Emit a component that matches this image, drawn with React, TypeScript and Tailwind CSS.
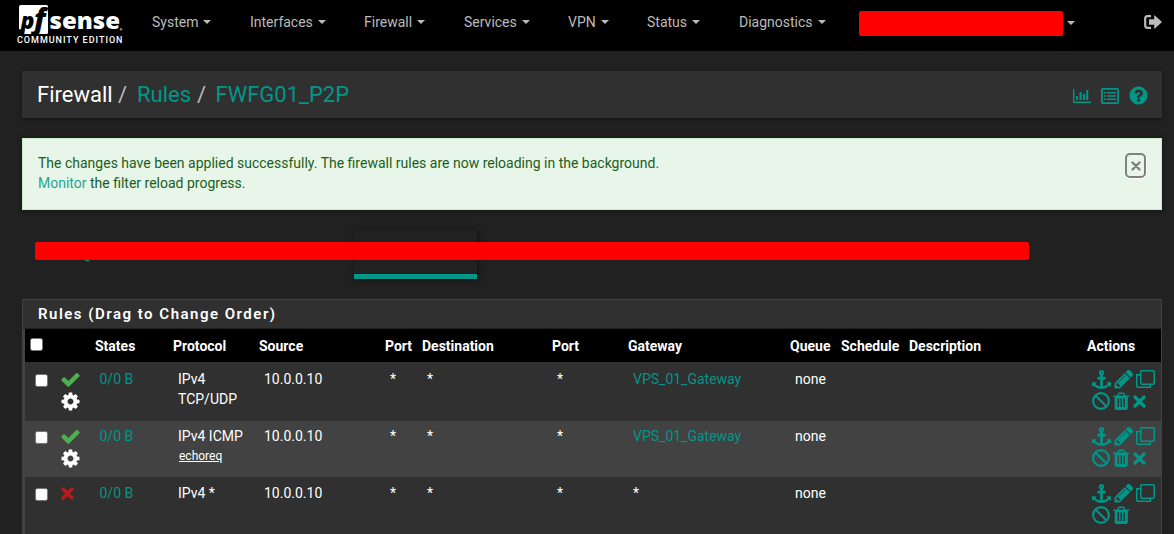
import React from 'react';

const PATHS = {
  check:
    'M1671 566q0 40-28 68l-724 724-136 136q-28 28-68 28t-68-28l-136-136-362-362q-28-28-28-68t28-68l136-136q28-28 68-28t68 28l294 295 656-657q28-28 68-28t68 28l136 136q28 28 28 68z',
  cog: 'M1152 896q0-106-75-181t-181-75-181 75-75 181 75 181 181 75 181-75 75-181zm512-109v222q0 12-8 23t-20 13l-185 28q-19 54-39 91 35 50 107 138 10 12 10 25t-9 23q-27 37-99 108t-94 71q-12 0-26-9l-138-108q-44 23-91 38-16 136-29 186-7 28-36 28h-222q-14 0-24.5-8.5t-11.5-21.5l-28-184q-49-16-90-37l-141 107q-10 9-25 9-14 0-25-11-126-114-165-168-7-10-7-23 0-12 8-23 15-21 51-66.5t54-70.5q-27-50-41-99l-183-27q-13-2-21-12.5t-8-23.5v-222q0-12 8-23t19-13l186-28q14-46 39-92-40-57-107-138-10-12-10-24 0-10 9-23 26-36 98.500-107.500t94.500-71.500q13 0 26 10l138 107q44-23 91-38 16-136 29-186 7-28 36-28h222q14 0 24.500 8.500t11.500 21.500l28 184q49 16 90 37l142-107q9-9 24-9 13 0 25 10 129 119 165 170 7 8 7 22 0 12-8 23-15 21-51 66.500t-54 70.500q26 50 41 98l183 28q13 2 21 12.500t8 23.500z',
  trash:
    'M704 1376v-704q0-14-9-23t-23-9h-64q-14 0-23 9t-9 23v704q0 14 9 23t23 9h64q14 0 23-9t9-23zm256 0v-704q0-14-9-23t-23-9h-64q-14 0-23 9t-9 23v704q0 14 9 23t23 9h64q14 0 23-9t9-23zm256 0v-704q0-14-9-23t-23-9h-64q-14 0-23 9t-9 23v704q0 14 9 23t23 9h64q14 0 23-9t9-23zm-544-992h448l-48-117q-7-9-17-11h-317q-10 2-17 11zm928 32v64q0 14-9 23t-23 9h-96v948q0 83-47 143.5t-113 60.5h-832q-66 0-113-58.5t-47-141.5v-952h-96q-14 0-23-9t-9-23v-64q0-14 9-23t23-9h309l70-167q15-37 54-63t79-26h320q40 0 79 26t54 63l70 167h309q14 0 23 9t9 23z',
  pencil:
    'M491 1536l91-91-235-235-91 91v107h128v128h107zm523-928q0-22-22-22-10 0-17 7l-542 542q-7 7-7 17 0 22 22 22 10 0 17-7l542-542q7-7 7-17zm-54-192l416 416-832 832h-416v-416zm683 96q0 53-37 90l-166 166-416-416 166-165q36-38 90-38 53 0 91 38l235 234q37 39 37 91z',
  anchor:
    'M960 256q0-26-19-45t-45-19-45 19-19 45 19 45 45 19 45-19 19-45zm832 928v352q0 22-20 30-8 2-12 2-12 0-23-9l-93-93q-119 143-318.500 226.500t-429.500 83.500-429.500-83.500-318.500-226.500l-93 93q-9 9-23 9-4 0-12-2-20-8-20-30v-352q0-14 9-23t23-9h352q22 0 30 20 8 19-7 35l-100 100q67 91 189.500 153.500t271.500 82.500v-647h-192q-26 0-45-19t-19-45v-128q0-26 19-45t45-19h192v-163q-58-34-93-92.500t-35-128.500q0-106 75-181t181-75 181 75 75 181q0 70-35 128.500t-93 92.500v163h192q26 0 45 19t19 45v128q0 26-19 45t-45 19h-192v647q149-20 271.500-82.500t189.500-153.500l-100-100q-15-16-7-35 8-20 30-20h352q14 0 23 9t9 23z',
  question:
    'M1024 1376v-192q0-14-9-23t-23-9h-192q-14 0-23 9t-9 23v192q0 14 9 23t23 9h192q14 0 23-9t9-23zm256-672q0-88-55.500-163t-138.500-116-170-41q-243 0-371 213-15 24 8 42l132 100q7 6 19 6 16 0 25-12 53-68 86-92 34-24 86-24 48 0 85.500 26t37.500 59q0 38-20 61t-68 45q-63 28-115.500 86.500t-52.500 125.500v36q0 14 9 23t23 9h192q14 0 23-9t9-23q0-19 21.500-49.500t54.500-49.500q32-18 49-28.500t46-35 44.500-48 28-60.500 12.500-81zm384 192q0 209-103 385.500t-279.500 279.500-385.500 103-385.500-103-279.500-279.500-103-385.500 103-385.500 279.500-279.500 385.500-103 385.500 103 279.500 279.500 103 385.500z',
};

function Icon({ name, className }: { name: keyof typeof PATHS; className?: string }) {
  return (
    <svg viewBox="0 0 1792 1792" fill="currentColor" className={`shrink-0 overflow-visible ${className ?? ''}`}>
      <path d={PATHS[name]} />
    </svg>
  );
}

function CrossIcon({ className }: { className?: string }) {
  return (
    <svg viewBox="0 0 13 13" className={`shrink-0 ${className ?? ''}`}>
      <path d="M2 2l9 9M11 2l-9 9" stroke="currentColor" strokeWidth="3.2" strokeLinecap="round" />
    </svg>
  );
}

function BanIcon() {
  return (
    <svg viewBox="0 0 18 18" fill="none" stroke="currentColor" className="size-[18px] shrink-0">
      <circle cx="9" cy="9" r="7.900" strokeWidth="2.100" />
      <path d="M3.500 3.500l11 11" strokeWidth="2.100" />
    </svg>
  );
}

function SignOutIcon({ className }: { className?: string }) {
  return (
    <svg viewBox="0 0 18 14" className={`h-[14px] w-[18px] ${className ?? ''}`}>
      <path d="M7 1.100H3.500Q1.200 1.100 1.200 3.400v7.200q0 2.300 2.300 2.300H7" fill="none" stroke="currentColor" strokeWidth="2.200" />
      <path d="M5 4.200h5.200V.800q0-.900.700-.300l6.600 5.900q.600.600 0 1.200l-6.600 5.900q-.700.600-.700-.300V9.800H5z" fill="currentColor" />
    </svg>
  );
}

function CloneIcon() {
  return (
    <svg viewBox="0 0 19 18" fill="none" stroke="currentColor" className="h-[18px] w-[19px] shrink-0">
      <rect x="4.750" y="0.750" width="13.500" height="13.500" rx="1" strokeWidth="1.500" />
      <path d="M4 4.700H.750V16.250q0 1 1 1H14.300V14.500" strokeWidth="1.500" />
    </svg>
  );
}

function ChartIcon() {
  return (
    <svg viewBox="0 0 18 14" fill="currentColor" className="h-[14px] w-[18px]">
      <path d="M0 0h1.400v12.500H18V14H0zM3 7h2v4H3zM6.500 3h2v8h-2zM9.800 5h2v6h-2zM13.200 1h2v10h-2z" />
    </svg>
  );
}

function ListIcon() {
  return (
    <svg viewBox="0 0 18 16" className="h-[16px] w-[18px]">
      <rect x="0.900" y="0.900" width="16.200" height="14.200" rx="1" fill="none" stroke="currentColor" strokeWidth="1.800" />
      <path
        fill="currentColor"
        d="M3 4h2v1.500H3zM6 4h9v1.500H6zM3 7.200h2v1.500H3zM6 7.200h9v1.500H6zM3 10.500h2V12H3zM6 10.500h9V12H6z"
      />
    </svg>
  );
}

function Logo() {
  return (
    <svg viewBox="0 0 124 50" className="h-[50px] w-[124px] shrink-0">
      <path d="M21 5H46.500q1.500 0 1.500 1.500V32.500q0 1.500-1.500 1.500H22V30L19 29V7q0-2 2-2z" fill="#fff" />
      <g fontFamily="Open Sans, sans-serif" fontWeight="800">
        <text y="29" fontStyle="italic" fill="#000">
          <tspan x="20.500" fontSize="23">p</tspan>
          <tspan x="34" fontSize="28">f</tspan>
        </text>
        <text x="49.500" y="29" fontSize="23.500" textLength="70.500" lengthAdjust="spacingAndGlyphs" fill="#fff">
          sense
        </text>
      </g>
      <circle cx="121" cy="29.300" r="1.200" fill="#888" />
      <text x="17" y="43" fontFamily="Roboto, sans-serif" fontWeight="500" fontSize="9" textLength="105.500" fill="#fff">
        COMMUNITY EDITION
      </text>
    </svg>
  );
}

function Caret() {
  return <span className="border-x-4 border-t-4 border-x-transparent border-t-[#bbb]" />;
}

const MENU = [
  { label: 'System', width: 'w-[98px]', gap: 'gap-[5px]' },
  { label: 'Interfaces', width: 'w-[114px]', gap: 'gap-[5px]' },
  { label: 'Firewall', width: 'w-[100px]', gap: 'gap-[5px]' },
  { label: 'Services', width: 'w-[104px]', gap: 'gap-[5px]' },
  { label: 'VPN', width: 'w-[79px]', gap: 'gap-[5px]' },
  { label: 'Status', width: 'w-[92px]', gap: 'gap-[5px]' },
  { label: 'Diagnostics', width: 'w-[120px]', gap: 'gap-[5px]' },
];

const COLUMNS = [
  { label: '', width: 'w-[27px]' },
  { label: '', width: 'w-[38px]' },
  { label: 'States', width: 'w-[78px]' },
  { label: 'Protocol', width: 'w-[86px]' },
  { label: 'Source', width: 'w-[126px]' },
  { label: 'Port', width: 'w-[37px]' },
  { label: 'Destination', width: 'w-[130px]' },
  { label: 'Port', width: 'w-[76px]' },
  { label: 'Gateway', width: 'w-[162px]' },
  { label: 'Queue', width: 'w-[51px]' },
  { label: 'Schedule', width: 'w-[68px]' },
  { label: 'Description', width: 'w-[178px]' },
  { label: 'Actions', width: 'w-[79px]' },
];

const RULES = [
  { pass: true, proto: 'IPv4', second: 'TCP/UDP', gateway: 'VPS_01_Gateway', row: 'h-[59px] bg-[#303030] [&>td]:pt-[7px]' },
  { pass: true, proto: 'IPv4 ICMP', sub: 'echoreq', gateway: 'VPS_01_Gateway', row: 'h-[56px] bg-[#424242] [&>td]:pt-[5px]' },
  { pass: false, proto: 'IPv4 *', gateway: '*', row: 'h-[59px] bg-[#303030] [&>td]:pt-[6px]' },
];

function Checkbox() {
  return <span role="checkbox" aria-checked="false" className="block size-[13px] rounded-[2.500px] border border-[#767676] bg-white" />;
}

export default function App() {
  return (
    <div className="h-[534px] overflow-hidden bg-[#212121] font-['Roboto',sans-serif] text-[13px] leading-5 text-white">
      <nav className="flex h-[51px] bg-black text-[#bbb]">
        <Logo />
        <div className="ml-[28px] flex h-[44px] items-center text-[14px]">
          {MENU.map((m) => (
            <div key={m.label} className={`flex shrink-0 items-center ${m.gap} ${m.width}`}>
              {m.label}
              <Caret />
            </div>
          ))}
        </div>
        <div className="mt-[11px] h-[25px] w-[204px] shrink-0 rounded-[2px] bg-[#ff0000]" />
        <div className="flex h-[45px] items-center pl-1">
          <Caret />
        </div>
        <SignOutIcon className="ml-auto mr-[12px] mt-[15px]" />
      </nav>

      <main className="ml-[22px] w-[1140px]">
        <header className="mt-5 flex h-[47px] items-center bg-[#303030] px-[15px] shadow-[0_1px_4px_rgba(0,0,0,0.4)]">
          <h1 className="flex text-[22px] leading-[30px] text-[#009688]">
            <span className="w-[81px] text-white">Firewall</span>
            <span className="w-[19px] text-[#bbb]">/</span>
            <span className="w-[60px]">Rules</span>
            <span className="w-[18.500px] text-[#bbb]">/</span>
            <span>FWFG01_P2P</span>
          </h1>
          <div className="ml-auto flex items-center gap-[10px] pt-[2px] text-[#009688]">
            <ChartIcon />
            <ListIcon />
            <Icon name="question" className="-mx-[1.500px] size-[21px]" />
          </div>
        </header>

        <section className="mt-5 flex h-[72px] justify-between border border-[#d0e9c6] bg-[#e8f5e9] px-[15px] pt-[14px] text-[14px] text-[#1b5e20] shadow-[0_1px_5px_rgba(0,0,0,0.4)]">
          <div>
            The changes have been applied successfully. The firewall rules are now reloading in the background.
            <br />
            <span className="text-[#26a69a]">Monitor</span> the filter reload progress.
          </div>
          <button className="flex h-[25px] w-[21px] items-center justify-center rounded-[5px] border-2 border-[#7b837c] text-[#747c75] shadow-[1px_1px_0_white]">
            <svg viewBox="0 0 10 10" className="size-[10px]">
              <path d="M1.500 1.500l7 7M8.500 1.500l-7 7" stroke="currentColor" strokeWidth="2.200" strokeLinecap="round" />
            </svg>
          </button>
        </section>

        <div className="relative mt-5 h-[49px]">
          <div className="ml-[332px] h-full w-[123px] border-b-[5px] border-[#009688] shadow-[1px_1px_6px_rgba(0,0,0,0.5)]" />
          <span className="absolute left-[63px] top-[30px] h-px w-[4px] bg-[#009688]" />
          <div className="absolute left-[13px] top-[12px] h-[18px] w-[994px] rounded-[2px] bg-[#ff0000]" />
        </div>

        <section className="mt-5 w-[1140px] border border-[#424242] bg-[#303030]">
          <h2 className="h-[29px] border-b border-[#212121] pl-[15px] pt-[4px] text-[15px] font-semibold tracking-[1.5px]">
            Rules (Drag to Change Order)
          </h2>
          <div className="border-l-2 border-[#424242]">
            <table className="w-[1136px] table-fixed border-collapse">
              <colgroup>
                {COLUMNS.map((c, i) => (
                  <col key={i} className={c.width} />
                ))}
              </colgroup>
              <thead>
                <tr className="h-[33px] bg-black text-left text-[14px]">
                  {COLUMNS.map((c, i) => (
                    <th key={i} className="whitespace-nowrap p-0 pl-[5px] pt-px font-bold">
                      {i === 0 ? <div className="pb-[4px]"><Checkbox /></div> : c.label}
                    </th>
                  ))}
                </tr>
              </thead>
              <tbody>
                {RULES.map((r) => (
                  <tr key={r.proto} className={`align-top text-[14px] [&>td]:whitespace-nowrap [&>td]:pl-[10px] ${r.row}`}>
                    <td>
                      <div className="pt-[5px]"><Checkbox /></div>
                    </td>
                    <td>
                      <div className="-ml-[2px]">
                        {r.pass ? (
                          <>
                            <Icon name="check" className="size-[21px] text-[#4caf50]" />
                            <Icon name="cog" className="mt-px size-[21px]" />
                          </>
                        ) : (
                          <CrossIcon className="ml-px mt-[4px] size-[13px] text-[#b71c1c]" />
                        )}
                      </div>
                    </td>
                    <td className="text-[#009688]"><span className="-ml-[0.500px]">0/0 B</span></td>
                    <td>
                      {r.proto}
                      {r.second && <div>{r.second}</div>}
                      {r.sub && <div className="pl-px text-[12px] underline">{r.sub}</div>}
                    </td>
                    <td>10.0.0.10</td>
                    <td>*</td>
                    <td>*</td>
                    <td>*</td>
                    <td className={r.gateway === '*' ? '' : 'text-[#009688]'}>{r.gateway}</td>
                    <td>none</td>
                    <td />
                    <td />
                    <td className="text-[#009688]">
                      <div className="flex h-5 items-center">
                        <Icon name="anchor" className="size-[19px]" />
                        <Icon name="pencil" className="ml-[2px] mr-px size-[22px]" />
                        <CloneIcon />
                      </div>
                      <div className="mt-[2px] flex h-5 items-center">
                        <BanIcon />
                        <Icon name="trash" className="ml-[1px] size-[20.500px]" />
                        {r.pass && <CrossIcon className="ml-[1px] size-[13px]" />}
                      </div>
                    </td>
                  </tr>
                ))}
              </tbody>
            </table>
          </div>
        </section>
      </main>
    </div>
  );
}
